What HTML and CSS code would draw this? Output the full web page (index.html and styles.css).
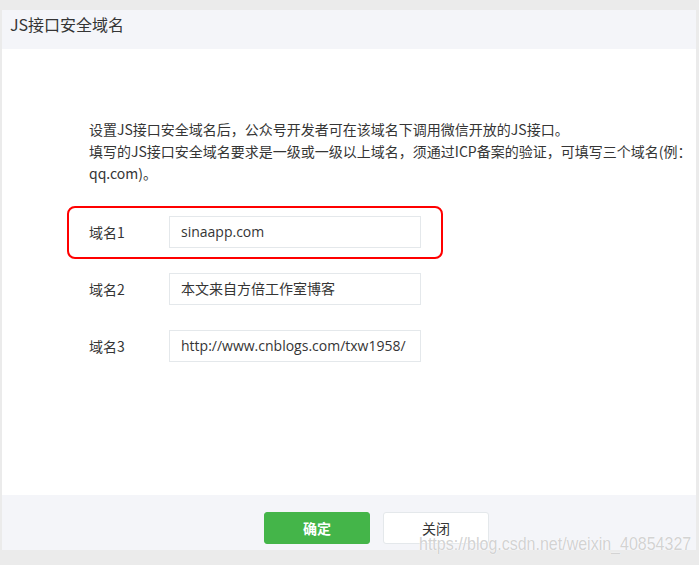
FILE: index.html
```html
<!DOCTYPE html>
<html lang="zh-CN">
<head>
<meta charset="utf-8">
<title>JS接口安全域名</title>
<link rel="stylesheet" href="styles.css">
</head>
<body>
<div class="page">
  <div class="dialog">
    <div class="dialog-hd">JS接口安全域名</div>
    <div class="dialog-bd">
      <div class="tips">
        <span class="tip-line">设置JS接口安全域名后，公众号开发者可在该域名下调用微信开放的JS接口。</span>
        <span class="tip-line">填写的JS接口安全域名要求是一级或一级以上域名，须通过ICP备案的验证，可填写三个域名(例：</span>
        <span class="tip-line">qq.com)。</span>
      </div>
      <div class="form">
        <div class="row row-marked">
          <label class="row-label">域名1</label>
          <div class="input">sinaapp.com</div>
          <div class="mark"></div>
        </div>
        <div class="row">
          <label class="row-label">域名2</label>
          <div class="input">本文来自方倍工作室博客</div>
        </div>
        <div class="row">
          <label class="row-label">域名3</label>
          <div class="input">http://www.cnblogs.com/txw1958/</div>
        </div>
      </div>
    </div>
    <div class="dialog-ft">
      <button class="btn btn-primary">确定</button>
      <button class="btn btn-default">关闭</button>
      <span class="watermark">https://blog.csdn.net/weixin_40854327</span>
    </div>
  </div>
</div>
</body>
</html>
```
FILE: styles.css
```css
html, body {
  margin: 0;
  padding: 0;
}
body {
  background: #ebebeb;
  font-family: "Noto Sans CJK SC", "Noto Sans", sans-serif;
  color: #353535;
  width: 699px;
  height: 565px;
  overflow: hidden;
}
.page {
  padding: 10px 3px 0 2px;
}
.dialog {
  width: 694px;
  background: #fff;
  position: relative;
}
.dialog-hd {
  height: 39px;
  background: #f4f5f9;
  padding: 0 8px;
  font-size: 16px;
  line-height: 29px;
  color: #353535;
}
.dialog-bd {
  height: 446px;
  padding: 69px 0 0 87px;
  box-sizing: border-box;
}
.tips {
  font-size: 14px;
  line-height: 22px;
  color: #353535;
}
.tip-line {
  display: block;
  white-space: nowrap;
}
.form {
  margin-top: 32px;
  display: flex;
  flex-direction: column;
  gap: 25px;
}
.row {
  display: flex;
  align-items: center;
  position: relative;
}
.row-label {
  width: 80px;
  font-size: 14px;
  color: #353535;
}
.input {
  width: 252px;
  height: 32px;
  box-sizing: border-box;
  border: 1px solid #e4e8eb;
  padding: 0 10px 0 11px;
  font-size: 14px;
  line-height: 30px;
  color: #353535;
  white-space: nowrap;
  overflow: hidden;
  font-family: "Open Sans", "Noto Sans CJK SC", sans-serif;
}
.mark {
  position: absolute;
  left: -22px;
  top: -10px;
  width: 376px;
  height: 53px;
  box-sizing: border-box;
  border: 2px solid #ff0000;
  border-radius: 8px;
  pointer-events: none;
}
.dialog-ft {
  height: 55px;
  background: #f4f5f9;
  padding: 17px 0 0 262px;
  box-sizing: border-box;
  display: flex;
  gap: 13px;
  align-items: flex-start;
  position: relative;
}
.btn {
  height: 32px;
  border-radius: 3px;
  font-size: 14px;
  font-family: "Noto Sans CJK SC", sans-serif;
  padding: 0;
  cursor: pointer;
}
.btn-primary {
  width: 106px;
  background: #44b549;
  border: 1px solid #44b549;
  color: #fff;
  font-weight: bold;
}
.btn-default {
  width: 106px;
  background: #fff;
  border: 1px solid #e4e8eb;
  color: #353535;
}
.watermark {
  position: absolute;
  left: 417px;
  top: 38px;
  font-family: "Liberation Sans", Arial, sans-serif;
  font-size: 16px;
  line-height: 18px;
  color: rgba(205, 205, 205, 0.9);
  text-shadow: 0 0 1px #fff, 0 0 1px #fff;
  white-space: nowrap;
  transform: scaleY(1.2);
  transform-origin: left top;
}
```
